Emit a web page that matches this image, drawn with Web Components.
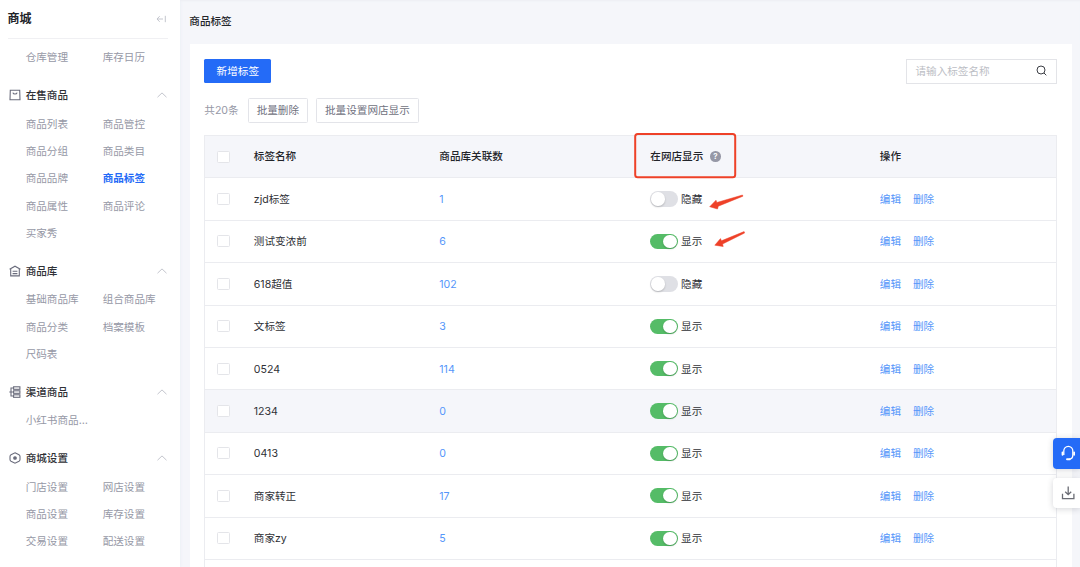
<!DOCTYPE html>
<html lang="zh-CN">
<head>
<meta charset="utf-8">
<title>商品标签</title>
<style>
  html, body { height: 100%; }
  body {
    margin: 0;
    overflow: hidden;
    background: #f5f6fa;
    font-family: Inter, "Noto Sans CJK SC", sans-serif;
    font-size: 10.6px;
    line-height: 16px;
    color: #2f3136;
    --blue: #246bf7;
    --link: #5596fa;
    --muted: #9698a6;
    --line: #ebecf0;
  }
</style>
</head>
<body>
<shop-app>
  <side-bar slot="side" heading="商城">
    <menu-group items="仓库管理,库存日历"></menu-group>
    <menu-group heading="在售商品" icon="bag" active="商品标签" items="商品列表,商品管控,商品分组,商品类目,商品品牌,商品标签,商品属性,商品评论,买家秀"></menu-group>
    <menu-group heading="商品库" icon="house" items="基础商品库,组合商品库,商品分类,档案模板,尺码表"></menu-group>
    <menu-group heading="渠道商品" icon="channel" items="小红书商品…"></menu-group>
    <menu-group heading="商城设置" icon="gear" items="门店设置,网店设置,商品设置,库存设置,交易设置,配送设置"></menu-group>
  </side-bar>
  <span slot="title">商品标签</span>
  <tag-toolbar></tag-toolbar>
  <tag-table></tag-table>
</shop-app>
<float-tools></float-tools>
<mark-layer></mark-layer>

<script>
const ICONS = {
  bag: '<path d="M1.300 1.300h9.400l.3 9.400H1z"/><path d="M3.900 3.600c.4 1.900 3.800 1.900 4.200 0"/>',
  house: '<path d="M.6 4.300 6 1.200l5.400 3.100"/><path d="M1.700 3.900v7h8.600v-7"/><path d="M3.600 6.200h4.800M3.600 8.600h4.800"/>',
  channel: '<rect x="4.600" y=".8" width="6.300" height="2.500"/><rect x="4.600" y="4.800" width="6.300" height="2.500"/><rect x="4.600" y="8.800" width="6.300" height="2.500"/><path d="M4.600 2H2v8h2.600M.3 6h4.300"/>',
  gear: '<path d="M6 .8 10 2.800Q11 3.400 11 4.500v3Q11 8.600 10 9.200L6 11.200 2 9.200Q1 8.600 1 7.500v-3Q1 3.400 2 2.800z"/><circle cx="6" cy="6" r="1.300" fill="#6a6c7c"/>'
};

class ShopApp extends HTMLElement {
  constructor() {
    super();
    this.attachShadow({ mode: 'open' }).innerHTML = `
      <style>
        :host { display: flex; height: 100vh; }
        main { flex: 1; min-width: 0; padding-right: 8px; display: flex; flex-direction: column; box-shadow: inset 0 2px 2px -1px #eceef3; }
        header { height: 16px; padding: 14px 0; line-height: 16px; font-weight: 500; color: #222429; }
        .card { flex: 1; min-height: 0; margin-left: 10px; padding: 15px 15px 0 14.300px; background: #fff; overflow: hidden; }
        header slot { display: block; padding-left: 9.300px; }
      </style>
      <slot name="side"></slot>
      <main>
        <header><slot name="title"></slot></header>
        <section class="card"><slot></slot></section>
      </main>
    `;
  }
}

class SideBar extends HTMLElement {
  constructor() {
    super();
    this.attachShadow({ mode: 'open' });
  }

  connectedCallback() {
    this.shadowRoot.innerHTML = `
      <style>
        :host { display: block; flex: none; width: 180px; height: 100%; background: #fff; box-shadow: 1px 0 3px #eef0f6; overflow: hidden; }
        .head { display: flex; align-items: center; justify-content: space-between; height: 39px; margin: 0 12px 4.500px 7.500px; border-bottom: 1px solid #f0f0f3; box-sizing: border-box; }
        h1 { margin: 0 0 1px; font-size: 12px; line-height: 18px; font-weight: 700; color: #222429; }
        svg { width: 10px; height: 8px; margin-right: 2px; fill: none; stroke: #c4c6ce; }
      </style>
      <div class="head">
        <h1>${this.getAttribute('heading')}</h1>
        <svg viewBox="0 0 10 8"><path d="M7 4H1M3.700 1.200 1 4l2.700 2.800M9.300.8v6.400"/></svg>
      </div>
      <slot></slot>
    `;
  }
}

class MenuGroup extends HTMLElement {
  constructor() {
    super();
    this.attachShadow({ mode: 'open' });
  }

  connectedCallback() {
    const heading = this.getAttribute('heading');
    const active = this.getAttribute('active');
    const items = this.getAttribute('items').split(',');
    this.shadowRoot.innerHTML = `
      <style>
        :host { display: block; margin-bottom: 9.200px; }
        .title { display: flex; align-items: center; height: 30px; padding: 0 13px 0 9px; font-weight: 500; color: #2f3136; }
        .title span { flex: 1; margin-left: 4.700px; padding-top: 2px; }
        .icon { width: 12px; height: 12px; fill: none; stroke: #6a6c7c; stroke-width: 1.100; }
        .arrow { width: 10px; height: 6px; fill: none; stroke: #c3c5cd; }
        .items { display: grid; grid-template-columns: 77px 77px; padding-left: 25.700px; grid-auto-rows: 27.300px; align-items: center; color: var(--muted); white-space: nowrap; }
        .items span { padding-top: 2px; }
        .items .active { color: var(--blue); font-weight: 700; }
      </style>
      ${heading ? `<div class="title">
        <svg class="icon" viewBox="0 0 12 12">${ICONS[this.getAttribute('icon')]}</svg>
        <span>${heading}</span>
        <svg class="arrow" viewBox="0 0 10 6"><path d="M.5 5.200 5 .9l4.500 4.300"/></svg>
      </div>` : ''}
      <div class="items">
        ${items.map(t => `<span class="${t === active ? 'active' : ''}">${t}</span>`).join('')}
      </div>
    `;
  }
}

class TagToolbar extends HTMLElement {
  constructor() {
    super();
    this.attachShadow({ mode: 'open' }).innerHTML = `
      <style>
        :host { display: block; }
        .row { display: flex; align-items: center; }
        .top { justify-content: space-between; height: 24px; }
        .batch { margin: 15px 0 12px; height: 25px; gap: 8px; color: var(--muted); }
        button { font: inherit; border: 1px solid #e3e4e9; border-radius: 1.500px; background: #fff; color: #6f7180; height: 25px; padding: 1px 8px 0; box-sizing: border-box; line-height: 16px; }
        .primary { height: 24px; width: 67px; padding: 2px 0 0; border: 0; background: var(--blue); color: #fff; }
        .search { display: flex; align-items: center; justify-content: space-between; width: 151px; height: 25px; box-sizing: border-box; padding: 0 9px 0 8.500px; border: 1px solid #e3e4e8; color: #bcbec5; }
        .search span { padding-top: 1px; }
        svg { width: 11px; height: 11px; margin-bottom: 1px; fill: none; stroke: #3c3e45; }
        .count { margin-right: 1px; padding-top: 1px; }
      </style>
      <div class="row top">
        <button class="primary">新增标签</button>
        <div class="search"><span>请输入标签名称</span>
          <svg viewBox="0 0 11 11"><circle cx="5" cy="5" r="4"/><path d="m8 8 2.300 2.300"/></svg>
        </div>
      </div>
      <div class="row batch">
        <span class="count">共20条</span>
        <button>批量删除</button>
        <button>批量设置网店显示</button>
      </div>
    `;
  }
}

class ToggleSwitch extends HTMLElement {
  constructor() {
    super();
    this.attachShadow({ mode: 'open' }).innerHTML = `
      <style>
        :host { display: inline-flex; align-items: center; gap: 3.500px; }
        .track { display: flex; width: 27.300px; height: 15.300px; padding: 1px; box-sizing: border-box; border-radius: 8px; background: #dfe0e5; }
        .knob { width: 13.300px; height: 13.300px; border-radius: 50%; background: #fff; box-shadow: 0 1px 2px rgba(0, 0, 0, .2); }
        :host([on]) .track { background: #55bc67; justify-content: flex-end; }
        .label { padding-top: 2px; }
      </style>
      <span class="track"><span class="knob"></span></span>
      <span class="label"><slot></slot></span>
    `;
  }
}

class TagTable extends HTMLElement {
  constructor() {
    super();
    this.attachShadow({ mode: 'open' });
    this.rows = [
      ['zjd标签', 1, false],
      ['测试变浓前', 6, true],
      ['618超值', 102, false],
      ['文标签', 3, true],
      ['0524', 114, true],
      ['1234', 0, true],
      ['0413', 0, true],
      ['商家转正', 17, true],
      ['商家zy', 5, true]
    ];
  }

  connectedCallback() {
    this.render();
  }

  render() {
    this.shadowRoot.innerHTML = `
      <style>
        :host { display: block; border: 1px solid var(--line); border-bottom: 0; height: 500px; }
        .row { display: grid; grid-template-columns: 36.500px 185.500px 211px 229.500px 1fr; align-items: center; height: 42.400px; box-sizing: border-box; padding-left: 12px; border-bottom: 1px solid var(--line); }
        .head { background: #f5f6fa; font-weight: 500; color: #222429; }
        .hover { background: #f5f6fa; }
        .box { display: block; width: 12.500px; height: 12px; box-sizing: border-box; border: 1px solid #e4e5e9; border-radius: 1.500px; background: #fff; }
        .text { padding-top: 2px; }
        .head .text { padding-top: 1px; }
        .link { color: var(--link); }
        .ops { display: flex; gap: 12px; }
        .tip { display: flex; align-items: center; gap: 7px; }
        .tip i { width: 10.500px; height: 10.500px; border-radius: 50%; background: #9698a6; color: #fff; font: 600 8px/10.500px Inter, sans-serif; text-align: center; }
      </style>
      <div class="row head">
        <span class="box"></span><span class="text">标签名称</span><span class="text">商品库关联数</span>
        <span class="tip"><span class="text">在网店显示</span><i>?</i></span><span class="text">操作</span>
      </div>
      ${this.rows.map(([name, count, on]) => `
      <div class="row ${name === '1234' ? 'hover' : ''}">
        <span class="box"></span>
        <span class="text">${name}</span>
        <span class="text link">${count}</span>
        <toggle-switch ${on ? 'on' : ''}>${on ? '显示' : '隐藏'}</toggle-switch>
        <span class="text ops link"><span>编辑</span><span>删除</span></span>
      </div>`).join('')}
    `;
  }
}

class FloatTools extends HTMLElement {
  constructor() {
    super();
    this.attachShadow({ mode: 'open' }).innerHTML = `
      <style>
        :host { position: absolute; right: 0; top: 438px; display: flex; flex-direction: column; gap: 9px; width: 27.500px; }
        div { display: flex; align-items: center; height: 30.500px; padding-left: 8px; box-sizing: border-box; border-radius: 4px 0 0 4px; background: #fff; box-shadow: 0 1px 6px rgba(40, 45, 60, .2); }
        .service { background: var(--blue); }
        svg { width: 15px; height: 16px; fill: none; stroke: #6a6c74; stroke-width: 1.300; }
        .service svg { stroke: #fff; }
      </style>
      <div class="service">
        <svg viewBox="0 0 15 16"><path d="M2.800 10V5.800a4.500 4.500 0 0 1 9 0V10c0 2.500-1.300 4-3.300 4"/><path d="M1.500 7.300v2.500M13.100 7.300v2.500" stroke-width="1.800" stroke-linecap="round"/><path d="M6 14.200h2.800" stroke-width="1.900" stroke-linecap="round"/></svg>
      </div>
      <div>
        <svg viewBox="0 0 15 16"><path d="M7.200 1.500v8M4.200 6.800l3 2.900 3-2.900M1.500 8.700v4.900h11.400V8.700"/></svg>
      </div>
    `;
  }
}

// red annotations over the table
class MarkLayer extends HTMLElement {
  constructor() {
    super();
    this.attachShadow({ mode: 'open' }).innerHTML = `
      <style>
        :host { position: absolute; left: 630px; top: 128px; pointer-events: none; }
        svg { display: block; width: 125px; height: 125px; }
      </style>
      <svg viewBox="0 0 125 125">
        <rect x="5.200" y="6" width="100" height="43.300" rx="2.500" fill="none" stroke="#ee4128" stroke-width="2"/>
        <g fill="#ee4128" stroke="#ee4128" stroke-width=".5" stroke-linejoin="round">
          <path d="M79.700 78.700 86 72.200l.8 2.300L112.500 67l.4 1.200L88.300 78.200l-.8 2.800z"/>
          <path d="m84.800 117.200 5.700-6.600.9 2.200 22.700-9.200.5 1.400-22 11 .6 2.500z"/>
        </g>
      </svg>
    `;
  }
}

customElements.define('shop-app', ShopApp);
customElements.define('side-bar', SideBar);
customElements.define('menu-group', MenuGroup);
customElements.define('tag-toolbar', TagToolbar);
customElements.define('toggle-switch', ToggleSwitch);
customElements.define('tag-table', TagTable);
customElements.define('float-tools', FloatTools);
customElements.define('mark-layer', MarkLayer);
</script>
</body>
</html>
